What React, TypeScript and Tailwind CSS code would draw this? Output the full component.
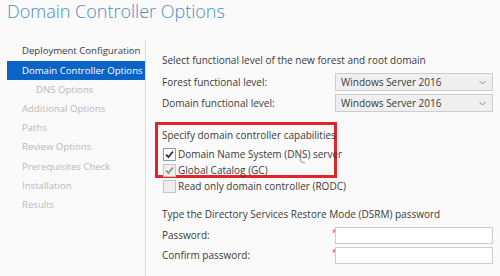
import React from 'react';

const steps = [
  { label: 'Deployment Configuration', state: 'done' },
  { label: 'Domain Controller Options', state: 'active' },
  { label: 'DNS Options', state: 'sub' },
  { label: 'Additional Options', state: 'todo' },
  { label: 'Paths', state: 'todo' },
  { label: 'Review Options', state: 'todo' },
  { label: 'Prerequisites Check', state: 'todo' },
  { label: 'Installation', state: 'todo' },
  { label: 'Results', state: 'todo' },
];

function Checkbox({ checked, disabled }: { checked?: boolean; disabled?: boolean }) {
  return (
    <span
      className={`w-[13px] h-[13px] border flex items-center justify-center shrink-0 ${
        disabled ? 'border-[#c4c4c4] bg-[#eeeeee]' : 'border-[#7f9fcc] bg-white'
      }`}
    >
      {checked && (
        <svg width="9" height="9" viewBox="0 0 9 9">
          <path
            d="M1 4.6 L3.4 7 L8 1.6"
            fill="none"
            stroke={disabled ? '#8a8a8a' : '#222'}
            strokeWidth="1.6"
          />
        </svg>
      )}
    </span>
  );
}

function Dropdown({ value }: { value: string }) {
  return (
    <div className="w-[158px] h-[18px] border border-[#cdcdcd] bg-[#efefef] flex items-center justify-between pl-[5px] pr-[6px]">
      <span>{value}</span>
      <svg width="7" height="5" viewBox="0 0 7 5">
        <path d="M0.5 1 L3.5 4 L6.5 1" fill="none" stroke="#8a8a8a" strokeWidth="1" />
      </svg>
    </div>
  );
}

function PasswordField() {
  return (
    <div className="flex items-start">
      <span className="text-[#e04848] text-[9px] leading-[9px] w-[3px] -ml-[3px] mt-[1px]">*</span>
      <div className="w-[158px] h-[17px] border border-[#cdcdcd] bg-white" />
    </div>
  );
}

export default function App() {
  return (
    <div
      className="w-[500px] h-[276px] bg-[#fafafa] overflow-hidden text-[#3a3a3a] text-[10px] whitespace-nowrap"
      style={{ fontFamily: '"Open Sans", "Noto Sans", sans-serif' }}
    >
      {/* Title */}
      <div className="h-[40px] pl-[7px] pt-[1px] text-[18px] leading-[20px] font-light text-[#4a8ec2]">
        Domain Controller Options
      </div>

      <div className="flex h-[236px]">
        {/* Step list */}
        <div className="w-[146px] border-r border-[#dddddd] pt-[2px] pl-[7px]">
          {steps.map((s) => (
            <div
              key={s.label}
              className={`h-[19.2px] flex items-center text-[9.6px] ${
                s.state === 'active'
                  ? 'bg-[#0a63c6] text-white pl-[15px]'
                  : s.state === 'done'
                  ? 'text-[#3a3a3a] pl-[15px]'
                  : s.state === 'sub'
                  ? 'text-[#b9b9b9] pl-[29px]'
                  : 'text-[#b9b9b9] pl-[15px]'
              }`}
            >
              {s.label}
            </div>
          ))}
        </div>

        {/* Form */}
        <div className="flex-1 pl-[16px] pt-[12px]">
          <div className="h-[16px] flex items-center">Select functional level of the new forest and root domain</div>
          <div className="mt-[5px] flex flex-col gap-[3px]">
            <div className="flex items-center">
              <span className="w-[173px]">Forest functional level:</span>
              <Dropdown value="Windows Server 2016" />
            </div>
            <div className="flex items-center">
              <span className="w-[173px]">Domain functional level:</span>
              <Dropdown value="Windows Server 2016" />
            </div>
          </div>

          {/* Highlighted capabilities */}
          <div className="relative mt-[10px] -ml-[7px] w-[182px] h-[56px] border-[3px] border-[#e3242b] pl-[4px] pt-[2px]">
            <div className="h-[16px] flex items-center">Specify domain controller capabilities</div>
            <div className="mt-[3px] flex items-center gap-[2px] h-[16px] pl-[1px]">
              <Checkbox checked />
              <span>Domain Name System (DNS) server</span>
            </div>
            <div className="flex items-center gap-[2px] h-[16px] pl-[1px]">
              <Checkbox checked disabled />
              <span>Global Catalog (GC)</span>
            </div>
            <svg className="absolute left-[141px] top-[30px]" width="7" height="9" viewBox="0 0 7 9">
              <path d="M1 0.5 L1.5 6.5 L6 8" fill="none" stroke="#8d9bb0" strokeWidth="1" />
            </svg>
          </div>
          <div className="flex items-center gap-[2px] h-[16px] pl-[1px]">
            <Checkbox disabled />
            <span>Read only domain controller (RODC)</span>
          </div>

          <div className="mt-[12px] h-[16px] flex items-center">
            Type the Directory Services Restore Mode (DSRM) password
          </div>
          <div className="mt-[5px] flex flex-col gap-[3px]">
            <div className="flex items-center">
              <span className="w-[173px]">Password:</span>
              <PasswordField />
            </div>
            <div className="flex items-center">
              <span className="w-[173px]">Confirm password:</span>
              <PasswordField />
            </div>
          </div>
        </div>
      </div>
    </div>
  );
}
